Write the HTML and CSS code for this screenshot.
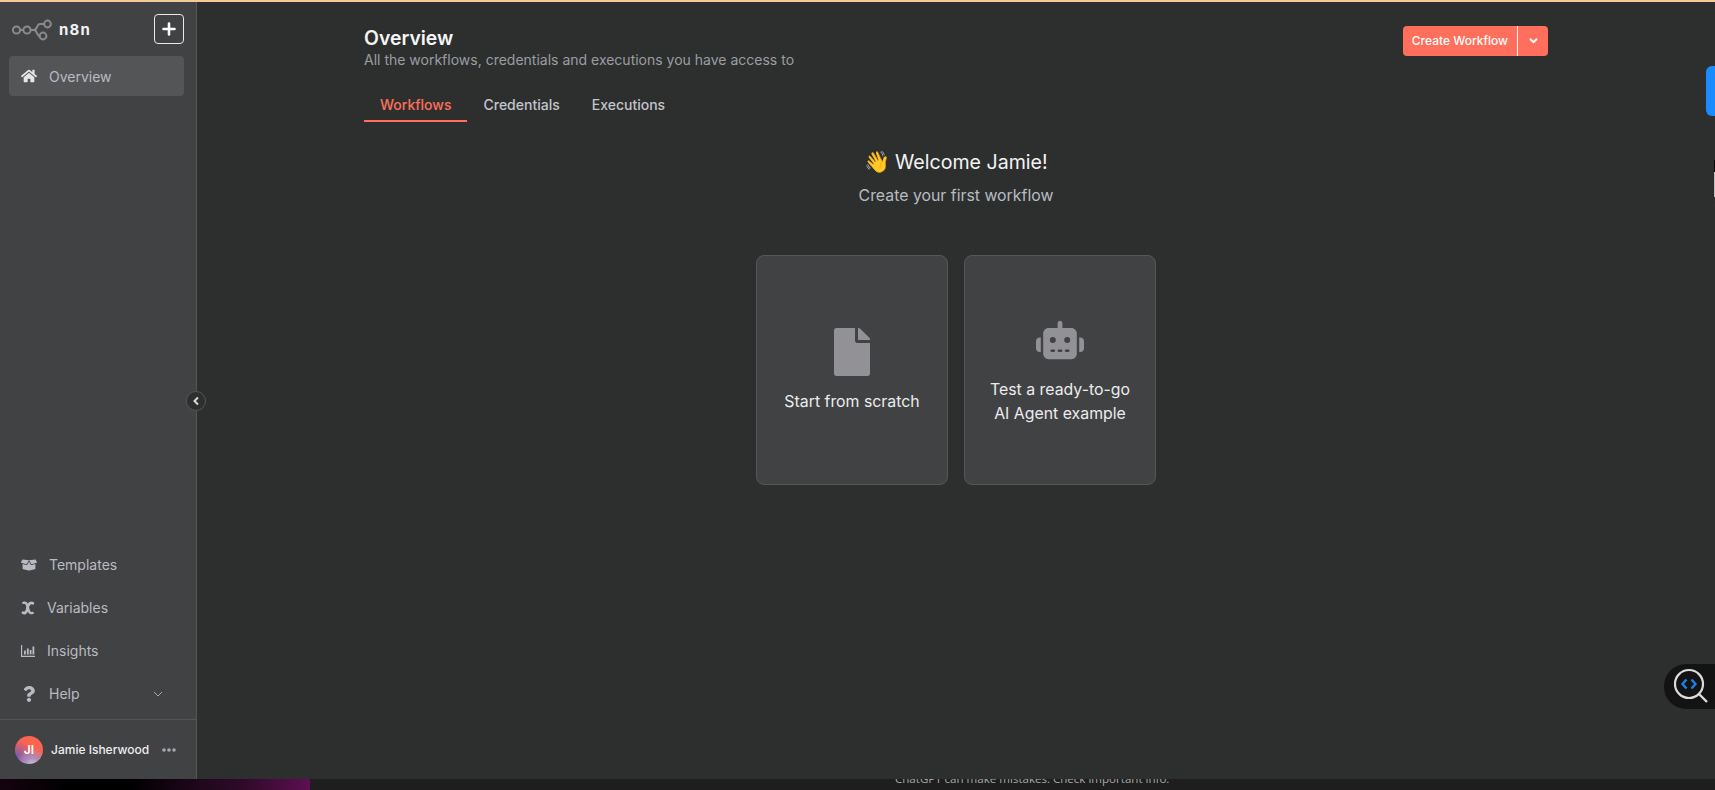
FILE: index.html
```html
<!DOCTYPE html>
<html lang="en">
<head>
	<meta charset="UTF-8">
	<title>Overview - n8n</title>
	<link rel="stylesheet" href="styles.css">
</head>
<body>
	<div class="app">
		<aside class="sidebar">
			<div class="brand">
				<svg class="logo" viewBox="0 0 42 28" fill="none" stroke="#8b8b8d" stroke-width="2">
					<circle cx="5.500" cy="15" r="3.600"/>
					<circle cx="16" cy="15" r="3.600"/>
					<circle cx="36.500" cy="9" r="3.400"/>
					<circle cx="32" cy="21" r="3.400"/>
					<path d="M9 15h3.500M19.600 15h3.400c3.500 0 2.500-6 6-6h4M23 15c3.500 0 2.500 6 5.500 6"/>
				</svg>
				<span class="brand-name">n8n</span>
				<button class="add-btn">
					<svg viewBox="0 0 14 14" width="14" height="14" stroke="#fff" stroke-width="2.600" stroke-linecap="round"><path d="M7 1.500v11M1.500 7h11"/></svg>
				</button>
			</div>
			<a class="nav-item selected">
				<svg class="icon" viewBox="0 0 576 512"><path d="M280.37 148.26L96 300.11V464a16 16 0 0 0 16 16l112.06-.29a16 16 0 0 0 15.92-16V368a16 16 0 0 1 16-16h64a16 16 0 0 1 16 16v95.64a16 16 0 0 0 16 16.05L464 480a16 16 0 0 0 16-16V300L295.67 148.26a12.19 12.19 0 0 0-15.3 0zM571.6 251.47L488 182.56V44.05a12 12 0 0 0-12-12h-56a12 12 0 0 0-12 12v72.61L318.47 43a48 48 0 0 0-61 0L4.34 251.47a12 12 0 0 0-1.6 16.9l25.5 31A12 12 0 0 0 45.15 301l235.22-193.74a12.19 12.19 0 0 1 15.3 0L530.9 301a12 12 0 0 0 16.9-1.6l25.5-31a12 12 0 0 0-1.7-16.93z"/></svg>
				Overview
			</a>

			<nav class="nav-bottom">
				<a class="nav-item">
					<svg class="icon" viewBox="0 0 640 512"><path d="M425.7 256c-16.9 0-32.8-9-41.4-23.4L320 126l-64.2 106.6c-8.7 14.5-24.6 23.5-41.5 23.5-4.5 0-9-.6-13.3-1.9L64 215v178c0 14.7 10 27.5 24.2 31l216.2 54.1c10.2 2.5 20.9 2.5 31 0L551.8 424c14.2-3.6 24.2-16.4 24.2-31V215l-137 39.1c-4.3 1.3-8.8 1.9-13.3 1.9zm212.6-112.2L586.8 41c-3.1-6.2-9.8-9.8-16.7-8.9L320 64l91.7 152.1c3.8 6.3 11.4 9.3 18.5 7.3l197.9-56.5c9.9-2.9 14.7-13.9 10.2-23.1zM53.2 41L1.7 143.8c-4.6 9.2.3 20.2 10.1 23l197.9 56.5c7.1 2 14.7-1 18.5-7.3L320 64 69.8 32.1c-6.9-.8-13.5 2.7-16.6 8.9z"/></svg>
					Templates
				</a>
				<a class="nav-item">
					<svg class="icon-x" viewBox="0 0 14 14" fill="none" stroke="#b9bbc3" stroke-linecap="round"><path stroke-width="2.400" d="M2.300 1.800c2.200-.6 3.400.6 4 2.800l1.400 4.800c.6 2.200 1.900 3.200 4 2.500"/><path stroke-width="2.800" d="M11.800 2.200c-1.800-.9-3.400 0-4.700 2.300L6 9.300c-1 2.400-2.500 3.300-4 2.500"/></svg>
					Variables
				</a>
				<a class="nav-item">
					<svg class="icon-bars" viewBox="0 0 14 14" fill="#b9bbc3"><path d="M0 1h1.200v10.800H14V13H0z"/><rect x="3" y="6.500" width="1.800" height="4"/><rect x="5.900" y="4.500" width="1.800" height="6"/><rect x="8.700" y="6" width="1.800" height="4.500"/><rect x="11.500" y="2.500" width="1.800" height="8"/></svg>
					Insights
				</a>
				<a class="nav-item">
					<svg class="icon" viewBox="0 0 512 512"><path transform="translate(64)" d="M202.021 0C122.202 0 70.503 32.703 29.914 91.026c-7.363 10.58-5.093 25.086 5.178 32.874l43.138 32.709c10.373 7.865 25.132 6.026 33.253-4.148 25.049-31.381 43.63-49.449 82.757-49.449 30.764 0 68.816 19.799 68.816 49.631 0 22.552-18.617 34.134-48.993 51.164-35.423 19.86-82.299 44.576-82.299 106.405V320c0 13.255 10.745 24 24 24h72.471c13.255 0 24-10.745 24-24v-5.773c0-42.86 125.268-44.645 125.268-160.627C377.504 66.256 286.902 0 202.021 0zM192 373.459c-38.196 0-69.271 31.075-69.271 69.271 0 38.195 31.075 69.27 69.271 69.27s69.271-31.075 69.271-69.271-31.075-69.27-69.271-69.27z"/></svg>
					Help
					<svg class="chevron" viewBox="0 0 10 6" fill="none" stroke="#a5a7ae" stroke-width="1"><path d="M1 1l4 4 4-4"/></svg>
				</a>
			</nav>

			<div class="user">
				<div class="avatar">JI</div>
				<span class="user-name">Jamie Isherwood</span>
				<svg class="dots" viewBox="0 0 14 4" fill="#a5a7ae"><circle cx="2" cy="2" r="1.800"/><circle cx="7" cy="2" r="1.800"/><circle cx="12" cy="2" r="1.800"/></svg>
			</div>
		</aside>

		<main class="main">
			<div class="content">
				<div class="head">
					<div>
						<h1>Overview</h1>
						<p class="subtitle">All the workflows, credentials and executions you have access to</p>
					</div>
					<div class="create">
						<span class="create-label">Create Workflow</span>
						<span class="create-more">
							<svg viewBox="0 0 10 7" width="9" height="6" fill="none" stroke="#fff" stroke-width="2.200" stroke-linecap="round" stroke-linejoin="round"><path d="M1.500 1.500L5 5l3.500-3.500"/></svg>
						</span>
					</div>
				</div>

				<ul class="tabs">
					<li class="selected">Workflows</li>
					<li>Credentials</li>
					<li>Executions</li>
				</ul>

				<div class="welcome">
					<h2><span class="wave">👋</span> Welcome Jamie!</h2>
					<p>Create your first workflow</p>
				</div>

				<div class="cards">
					<div class="card">
						<svg class="card-file" viewBox="0 0 384 512"><path d="M224 136V0H24C10.7 0 0 10.7 0 24v464c0 13.3 10.7 24 24 24h336c13.3 0 24-10.7 24-24V160H248c-13.2 0-24-10.800-24-24zm160-14.100v6.100H256V0h6.100c6.400 0 12.500 2.500 17 7l97.900 98c4.500 4.500 7 10.600 7 16.900z"/></svg>
						<span>Start from scratch</span>
					</div>
					<div class="card">
						<svg class="card-robot" viewBox="0 0 640 512"><path d="M320 0c17.700 0 32 14.300 32 32V96H472c39.800 0 72 32.200 72 72V440c0 39.800-32.200 72-72 72H168c-39.800 0-72-32.200-72-72V168c0-39.800 32.200-72 72-72H288V32c0-17.700 14.300-32 32-32zM208 384c-8.800 0-16 7.200-16 16s7.200 16 16 16h32c8.800 0 16-7.200 16-16s-7.200-16-16-16H208zm96 0c-8.800 0-16 7.200-16 16s7.200 16 16 16h32c8.800 0 16-7.200 16-16s-7.200-16-16-16H304zm96 0c-8.800 0-16 7.200-16 16s7.200 16 16 16h32c8.800 0 16-7.200 16-16s-7.200-16-16-16H400zM264 256a40 40 0 1 0 -80 0 40 40 0 1 0 80 0zm152 40a40 40 0 1 0 0-80 40 40 0 1 0 0 80zM48 224H64V416H48c-26.500 0-48-21.500-48-48V272c0-26.500 21.500-48 48-48zm544 0c26.500 0 48 21.500 48 48v96c0 26.500-21.500 48-48 48H576V224h16z"/></svg>
						<span>Test a ready-to-go<br>AI Agent example</span>
					</div>
				</div>
			</div>
		</main>
	</div>

	<div class="strip">
		<div class="strip-left"></div>
		<p class="strip-text">ChatGPT can make mistakes. Check important info.</p>
	</div>

	<button class="collapse">
		<svg viewBox="0 0 8 10" width="8" height="10" fill="none" stroke="#d6d8de" stroke-width="2"><path d="M6 1.500L2.500 5 6 8.500"/></svg>
	</button>
	<div class="blue-tab"></div>
	<div class="edge-sliver"></div>
	<div class="lens">
		<svg viewBox="0 0 40 40" width="40" height="40" fill="none">
			<circle cx="18" cy="17" r="14" stroke="#dcdcdc" stroke-width="2.200"/>
			<path d="M28 27l8 8" stroke="#dcdcdc" stroke-width="2.400"/>
			<path d="M15.500 12.500L11.500 17l4 4.500M20.500 12.500l4 4.500-4 4.500" stroke="#1f7fe8" stroke-width="2.400"/>
		</svg>
	</div>
</body>
</html>
```

FILE: styles.css
```css
*{
	margin: 0;
	padding: 0;
	box-sizing: border-box;
}
ul{
	list-style: none;
}
html, body{
	height: 100%;
	overflow: hidden;
}
body{
	font-family: Inter, "Liberation Sans", sans-serif;
	background: #1c1c1c;
	border-top: 2px solid #f4ca9c;
	display: flex;
	flex-direction: column;
}
.app{
	height: 777px;
	display: flex;
	flex: none;
}

/* sidebar */
.sidebar{
	width: 197px;
	flex: none;
	background: #414244;
	border-right: 1px solid #545557;
	display: flex;
	flex-direction: column;
	padding-top: 12px;
}
.brand{
	height: 30px;
	display: flex;
	align-items: center;
	padding: 0 12px 0 11px;
}
.logo{
	width: 42px;
	height: 28px;
}
.brand-name{
	margin-left: 6px;
	font-size: 15px;
	font-weight: 700;
	letter-spacing: 1.200px;
	color: #f2f2f2;
}
.add-btn{
	margin-left: auto;
	width: 30px;
	height: 30px;
	background: none;
	border: 1px solid #e8e8e8;
	border-radius: 4px;
	display: flex;
	align-items: center;
	justify-content: center;
}
.nav-item{
	height: 43px;
	display: flex;
	align-items: center;
	gap: 12px;
	padding-left: 21px;
	font-size: 14px;
	color: #b9bbc3;
}
.nav-item.selected{
	height: 40px;
	margin: 12px 12px 0 9px;
	padding-left: 12px;
	background: #545557;
	border-radius: 4px;
}
.icon{
	width: 16px;
	height: 16px;
	flex: none;
	fill: #e6e6e8;
}
.nav-bottom .icon{
	fill: #b9bbc3;
}
.icon-x, .icon-bars{
	width: 14px;
	height: 14px;
	flex: none;
}
.chevron{
	width: 10px;
	height: 6px;
	margin-left: auto;
	margin-right: 33px;
}
.nav-bottom{
	margin-top: auto;
	padding-bottom: 4px;
}
.user{
	height: 60px;
	border-top: 1px solid #545557;
	display: flex;
	align-items: center;
	padding: 0 0 0 15px;
}
.avatar{
	width: 28px;
	height: 28px;
	border-radius: 50%;
	background: radial-gradient(circle at 62% 105%, #d8cfd8 0, #a98fc0 22%, transparent 50%), radial-gradient(circle at 0 85%, #5c55c8 0, transparent 55%), #fb6450;
	color: #fff;
	font-size: 12px;
	font-weight: 600;
	display: flex;
	align-items: center;
	justify-content: center;
}
.user-name{
	margin-left: 8px;
	font-size: 12px;
	font-weight: 500;
	color: #eeeef0;
}
.dots{
	width: 14px;
	height: 4px;
	margin-left: 13px;
}

/* main */
.main{
	flex: 1;
	background: #2d2f2e;
}
.content{
	width: 1184px;
	margin: 0 auto;
	padding-top: 24px;
}
.head{
	display: flex;
	justify-content: space-between;
	align-items: flex-start;
}
h1{
	font-size: 19.400px;
	line-height: 24px;
	font-weight: 600;
	color: #f5f5f5;
}
.subtitle{
	font-size: 14px;
	line-height: 20px;
	color: #9b9da3;
}
.create{
	display: flex;
	height: 30px;
	background: #ff6f5c;
	border-radius: 4px;
	color: #fff;
	font-size: 12px;
	font-weight: 500;
	line-height: 30px;
}
.create-label{
	padding: 0 9px;
	border-right: 1px solid #fff;
}
.create-more{
	width: 30px;
	display: flex;
	align-items: center;
	justify-content: center;
}
.tabs{
	display: flex;
	margin-top: 21px;
	font-size: 14px;
}
.tabs li{
	height: 31px;
	padding: 0 16px;
	line-height: 28px;
	color: #c3c5cc;
	font-weight: 500;
}
.tabs .selected{
	color: #ff6f5c;
	border-bottom: 2px solid #ff6f5c;
}
.welcome{
	margin-top: 26px;
	text-align: center;
}
h2{
	font-size: 19.600px;
	line-height: 28px;
	font-weight: 400;
	color: #f3f3f5;
}
.wave{
	font-family: "Noto Color Emoji", Inter, sans-serif;
	font-size: 21px;
	margin-right: -1px;
}
.welcome p{
	margin-top: 9px;
	font-size: 15.850px;
	line-height: 22px;
	color: #b9bbc3;
}

/* cards */
.cards{
	display: flex;
	justify-content: center;
	gap: 16px;
	margin-top: 48px;
}
.card{
	width: 192px;
	height: 230px;
	padding-top: 1px;
	background: #414244;
	border: 1px solid #545557;
	border-radius: 8px;
	display: flex;
	flex-direction: column;
	align-items: center;
	justify-content: center;
	gap: 14px;
	text-align: center;
	font-size: 15.850px;
	line-height: 24px;
	color: #ececee;
}
.card svg{
	fill: #929296;
}
.card-file{
	width: 36px;
	height: 48px;
}
.card-robot{
	width: 48px;
	height: 48px;
}

/* bit of the page behind */
.strip{
	flex: 1;
	position: relative;
	overflow: hidden;
	display: flex;
	background: #1e1e1e;
}
.strip-left{
	width: 310px;
	flex: none;
	background: linear-gradient(90deg, #14030f 0, #000 22%, #000 42%, #1a0618 60%, #2e0a28 78%, #5e0f52 100%);
}
.strip-text{
	margin: -7px 0 0 585px;
	font-family: "Open Sans", sans-serif;
	font-size: 11.550px;
	line-height: 14px;
	color: #a8a8a8;
	white-space: nowrap;
}

/* overlays */
.collapse{
	position: absolute;
	left: 186px;
	top: 391px;
	width: 20px;
	height: 20px;
	border-radius: 50%;
	background: #2d2f2e;
	border: 1px solid #545557;
	display: flex;
	align-items: center;
	justify-content: center;
}
.blue-tab{
	position: absolute;
	right: 0;
	top: 66px;
	width: 9px;
	height: 50px;
	background: #1a8cff;
	border-radius: 6px 0 0 6px;
}
.edge-sliver{
	position: absolute;
	right: 0;
	top: 160px;
	width: 1px;
	height: 46px;
	background: linear-gradient(#0a0a0a 0, #0a0a0a 25%, #bbb 25%, #bbb 80%, #333 80%);
}
.lens{
	position: absolute;
	right: 0;
	top: 664px;
	width: 51px;
	height: 45px;
	background: #131313;
	border-radius: 22px 0 0 22px;
	padding: 0 0 0 7px;
	display: flex;
	align-items: center;
}
```
